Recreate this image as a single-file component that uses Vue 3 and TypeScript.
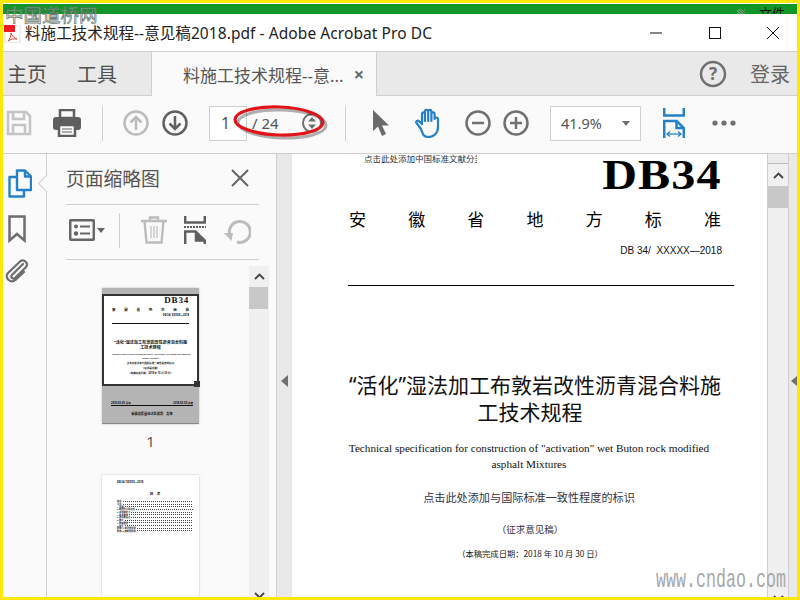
<script setup lang="ts">
const provinceChars: string[] = ['安', '徽', '省', '地', '方', '标', '准']
const tocRows: string[] = ['前言', '引言', '1 范围', '2 规范性引用文件', '3 术语和定义', '4 技术要求', '5 混合料设计', '6 施工', '7 质量管理', '8 安全', '附录 A 规范性附录', '附录 B 资料性附录']
</script>

<template>
  <div class="frame">
    <div class="green"><i class="hatch"></i><span class="clipped-file">文件</span></div>

    <header class="titlebar">
      <svg class="pdf-icon" width="17" height="18" viewBox="0 0 17 18">
        <path d="M1 0h15v18H1z" fill="#fff" stroke="#ddd" />
        <rect x="0" y="0" width="11" height="7" fill="#ee1c25" />
        <path d="M4 16c2-2 3-5 3-8 1 3 3 5 6 6-3-.5-6 0-9 2z" fill="none" stroke="#d8453e" stroke-width="1" />
      </svg>
      <span class="title-text">料施工技术规程--意见稿2018.pdf - Adobe Acrobat Pro DC</span>
      <div class="winbtns">
        <svg width="14" height="14" viewBox="0 0 14 14"><path d="M1 7h12" stroke="#111" stroke-width="1" /></svg>
        <svg width="14" height="14" viewBox="0 0 14 14"><rect x="1.5" y="1.5" width="11" height="11" fill="none" stroke="#111" /></svg>
        <svg width="14" height="14" viewBox="0 0 14 14"><path d="M1 1l12 12M13 1L1 13" stroke="#111" stroke-width="1" /></svg>
      </div>
    </header>

    <nav class="tabbar">
      <div class="nav-left">
        <span class="nav-item">主页</span>
        <span class="nav-item second">工具</span>
      </div>
      <div class="active-tab">
        <span class="tab-name">料施工技术规程--意...</span>
        <span class="tab-x">×</span>
      </div>
      <div class="nav-right">
        <svg width="28" height="28" viewBox="0 0 28 28">
          <circle cx="14" cy="14" r="12" fill="none" stroke="#707070" stroke-width="2.5" />
          <text x="14" y="20" text-anchor="middle" class="help-q">?</text>
        </svg>
        <span class="login">登录</span>
      </div>
    </nav>

    <div class="toolbar">
      <svg class="t-save" width="26" height="26" viewBox="0 0 26 26" fill="none" stroke="#c4c4c4" stroke-width="2.5">
        <path d="M2 2h18l4 4v18H2z" />
        <path d="M7 2v7h11V2M7 24v-9h12v9" />
      </svg>
      <svg class="t-print" width="28" height="28" viewBox="0 0 28 28">
        <path d="M7 1h14v8H7z" fill="none" stroke="#5f5f5f" stroke-width="2.5" />
        <rect x="0" y="8" width="28" height="13" rx="3" fill="#5f5f5f" />
        <rect x="6" y="16" width="16" height="11" fill="#fafafa" stroke="#5f5f5f" stroke-width="2.5" />
        <path d="M9 20h10M9 23h10" stroke="#5f5f5f" />
      </svg>
      <i class="sep t-sep1"></i>
      <svg class="t-up" width="26" height="26" viewBox="0 0 26 26" fill="none" stroke="#bcbcbc" stroke-width="2.5">
        <circle cx="13" cy="13" r="11.5" />
        <path d="M13 20V7M7.5 12.5L13 7l5.5 5.5" />
      </svg>
      <svg class="t-down" width="26" height="26" viewBox="0 0 26 26" fill="none" stroke="#606060" stroke-width="2.5">
        <circle cx="13" cy="13" r="11.5" />
        <path d="M13 6v13M7.5 13.5L13 19l5.5-5.5" />
      </svg>
      <div class="page-input">1</div>
      <span class="page-total">/ 24</span>
      <svg class="t-step" width="20" height="20" viewBox="0 0 20 20">
        <circle cx="10" cy="10" r="9" fill="#fafafa" stroke="#707070" stroke-width="2" />
        <path d="M10 4l4 4.5H6zM10 16l-4-4.5h8z" fill="#707070" />
      </svg>
      <i class="sep t-sep2"></i>
      <svg class="t-cursor" width="18" height="26" viewBox="0 0 18 26">
        <path d="M1 0v21l5-4.5L10 26l4-2-4-8.5h7z" fill="#6b6b6b" />
      </svg>
      <svg class="t-hand" width="28" height="30" viewBox="0 0 28 30" fill="none" stroke="#2680c8" stroke-width="2.2" stroke-linecap="round" stroke-linejoin="round">
        <path d="M6 21L1.500 15c-1-1.800 1.200-3.200 2.600-1.800L7 16V6c0-2.200 3-2.200 3 0v7-9.500c0-2.200 3.200-2.200 3.200 0V13 3.500c0-2.200 3.200-2.200 3.200 0V13 6c0-2.200 3.200-2.200 3.200 0v5 0c0-2 3.400-2 3.400 0v8c0 6-4 10-9.500 10S8 26 6 21z" />
      </svg>
      <svg class="t-minus" width="26" height="26" viewBox="0 0 26 26" fill="none" stroke="#707070" stroke-width="2.5">
        <circle cx="13" cy="13" r="11.5" />
        <path d="M7 13h12" />
      </svg>
      <svg class="t-plus" width="26" height="26" viewBox="0 0 26 26" fill="none" stroke="#707070" stroke-width="2.5">
        <circle cx="13" cy="13" r="11.5" />
        <path d="M7 13h12M13 7v12" />
      </svg>
      <div class="zoom-select">
        <span>41.9%</span>
        <i class="caret"></i>
      </div>
      <svg class="t-fit" width="22" height="30" viewBox="0 0 22 30" fill="none" stroke="#2680c8" stroke-width="2.5">
        <path d="M1.200 0v7.500h19.600V0" />
        <path d="M1.200 30V13h12.500l7.100 7v10" />
        <path d="M13.500 13v7h7" />
        <path d="M5 26h12" stroke-width="1.3" />
        <path d="M7 23.500L4 26l3 2.500M15 23.500l3 2.500-3 2.500" stroke-width="1.3" />
      </svg>
      <svg class="t-dots" width="24" height="6" viewBox="0 0 24 6" fill="#707070">
        <circle cx="3" cy="3" r="2.6" /><circle cx="12" cy="3" r="2.6" /><circle cx="21" cy="3" r="2.6" />
      </svg>
    </div>

    <main class="body">
      <aside class="rail">
        <svg width="24" height="29" viewBox="0 0 24 29" fill="none" stroke="#2680c8" stroke-width="2.4" stroke-linejoin="round">
          <path d="M9 1.500h8l6 6V21H9z" />
          <path d="M17 1.500v6h6" />
          <path d="M9 8H1.500v19.500H16V21" />
        </svg>
        <svg class="rail-book" width="18" height="28" viewBox="0 0 18 28" fill="none" stroke="#6e6e6e" stroke-width="2.5">
          <path d="M1.500 1.500h15v24L9 19l-7.500 6.500z" />
        </svg>
        <svg class="rail-clip" width="24" height="26" viewBox="0 0 24 26" fill="none" stroke="#6e6e6e" stroke-width="2.2" stroke-linecap="round">
          <path d="M18 6L7 17c-2 2.500 1 4.500 3 3L21 9c3-3.500-2-8.500-6-5.500L3 15c-4 4.500 2.500 11 7.500 7L19 14" />
        </svg>
        <i class="rail-notch"></i>
      </aside>

      <section class="panel">
        <div class="panel-head">
          <span class="panel-title">页面缩略图</span>
          <svg width="18" height="18" viewBox="0 0 18 18"><path d="M1 1l16 16M17 1L1 17" stroke="#666" stroke-width="2" /></svg>
        </div>
        <div class="panel-tools">
          <svg width="26" height="22" viewBox="0 0 26 22" fill="none" stroke="#666" stroke-width="2.5">
            <rect x="1.200" y="1.200" width="23.600" height="19.600" rx="1" />
            <circle cx="7" cy="7.500" r="2" fill="#666" stroke="none" />
            <circle cx="7" cy="14.500" r="2.200" fill="#666" stroke="none" />
            <path d="M11 7.500h10M11 14.500h10" stroke-width="2" />
          </svg>
          <i class="mini-caret"></i>
          <i class="sep panel-sep"></i>
          <svg class="p-trash" width="26" height="28" viewBox="0 0 26 28" fill="none" stroke="#bcbcbc" stroke-width="2.4">
            <path d="M0 5h26M9 5V1.500h8V5M3.500 5l2 21.500h15l2-21.500" />
            <path d="M10 10v12M13 10v12M16 10v12" stroke-width="1.2" />
          </svg>
          <svg class="p-extract" width="22" height="28" viewBox="0 0 22 28" fill="none" stroke="#5f5f5f" stroke-width="2.5">
            <path d="M1.200 0v6.500h19.600V0" />
            <path d="M0 11h22" stroke-width="2" stroke-dasharray="2 1" />
            <path d="M1.200 28V15.500h10.300l9.300 9V28" />
            <path d="M12 15.500v9h8" fill="#5f5f5f" />
          </svg>
          <svg class="p-rotate" width="27" height="27" viewBox="0 0 27 27" fill="none" stroke="#bcbcbc" stroke-width="3">
            <path d="M6 18.500a10.500 10.500 0 1 1 7 6.500" />
            <path d="M0 16l9 0-1.500 8z" fill="#bcbcbc" stroke="none" />
          </svg>
        </div>
        <div class="panel-view">
          <div class="thumbs">
            <div class="thumb one">
              <div class="shade-top"></div>
              <div class="selection">
                <div class="m-db">DB34</div>
                <div class="m-prov"><span v-for="c in provinceChars" :key="c">{{ c }}</span></div>
                <div class="m-code">DB 34/ XXXXX—2018</div>
                <div class="m-line"></div>
                <div class="m-title">“活化”湿法加工布敦岩改性沥青混合料施<br />工技术规程</div>
                <div class="m-en">Technical specification for construction of "activation" wet Buton rock modified<br />asphalt Mixtures</div>
                <div class="m-mark">点击此处添加与国际标准一致性程度的标识</div>
                <div class="m-mark">（征求意见稿）</div>
                <div class="m-mark">（本稿完成日期：2018 年 10 月 30 日）</div>
                <i class="handle"></i>
              </div>
              <div class="shade-bottom">
                <div class="m-dates"><span>2018-XX-XX 发布</span><span>2018-XX-XX 实施</span></div>
                <div class="m-line"></div>
                <div class="m-issuer">安徽省质量技术监督局　发布</div>
              </div>
            </div>
            <div class="thumb-num">1</div>
            <div class="thumb two">
              <div class="toc-note">DB 34/ XXXXX—2018</div>
              <div class="toc-head">目　次</div>
              <div v-for="row in tocRows" :key="row" class="toc-row"><span>{{ row }}</span><i></i></div>
            </div>
          </div>
          <div class="panel-scroll">
            <div class="sb-btn"><svg width="11" height="7" viewBox="0 0 11 7"><path d="M1 6l4.500-4.500L10 6" fill="none" stroke="#444" stroke-width="1.8" /></svg></div>
            <div class="sb-thumb"></div>
            <div class="sb-space"></div>
            <svg class="sb-down" width="11" height="7" viewBox="0 0 11 7"><path d="M1 1l4.500 4.500L10 1" fill="none" stroke="#444" stroke-width="1.8" /></svg>
          </div>
        </div>
      </section>

      <div class="gutter"><i class="arrow-left"></i></div>

      <section class="doc">
        <div class="page">
          <div class="doc-class">点击此处添加中国标准文献分类号</div>
          <div class="doc-db"><span>DB34</span></div>
          <div class="doc-prov"><span v-for="c in provinceChars" :key="c">{{ c }}</span></div>
          <div class="doc-code">DB 34/&nbsp;&nbsp;XXXXX—2018</div>
          <div class="doc-line"></div>
          <h1 class="doc-title"><span class="title-first">“活化”湿法加工布敦岩改性沥青混合料施</span>工技术规程</h1>
          <p class="doc-en">Technical specification for construction of "activation" wet Buton rock modified<br />asphalt Mixtures</p>
          <p class="doc-mark">点击此处添加与国际标准一致性程度的标识</p>
          <p class="doc-draft">（征求意见稿）</p>
          <p class="doc-date">（本稿完成日期：2018 年 10 月 30 日）</p>
        </div>
        <div class="doc-scroll">
          <div class="sb-stub"></div>
          <div class="sb-btn tall"><svg width="11" height="7" viewBox="0 0 11 7"><path d="M1 6l4.500-4.500L10 6" fill="none" stroke="#444" stroke-width="1.8" /></svg></div>
          <div class="sb-thumb"></div>
          <div class="sb-space"></div>
          <svg class="sb-down low" width="11" height="7" viewBox="0 0 11 7"><path d="M1 1l4.500 4.500L10 1" fill="none" stroke="#444" stroke-width="1.8" /></svg>
        </div>
        <div class="doc-side"><i class="arrow-left small"></i></div>
      </section>
    </main>

    <!-- overlays: the marks pasted over the capture -->
    <svg class="oval" width="104" height="44" viewBox="0 0 104 44">
      <ellipse cx="54" cy="25" rx="44" ry="14" fill="none" stroke="#000" stroke-opacity=".3" stroke-width="3" transform="rotate(2 54 25)" />
      <ellipse cx="51" cy="22" rx="44" ry="14" fill="none" stroke="#e2141b" stroke-width="3.2" transform="rotate(2 51 22)" />
    </svg>
    <div class="wm-cn">中国道桥网</div>
    <div class="wm-url">www.cndao.com</div>
  </div>
</template>

<style>
html, body { margin: 0; padding: 0; background: #fff; }
</style>

<style scoped>
* { box-sizing: border-box; }
.frame {
  position: relative;
  width: 800px;
  height: 600px;
  border: 3px solid #ffe70a;
  background: #fff;
  display: flex;
  flex-direction: column;
  overflow: hidden;
  font-family: "Noto Sans", "Noto Sans CJK SC", sans-serif;
  color: #555;
}
.green {
  flex: none;
  height: 10px;
  margin-top: 1px;
  background: #119627;
  position: relative;
  overflow: hidden;
}
.hatch {
  position: absolute;
  right: 52px;
  top: 5px;
  width: 8px;
  height: 5px;
  background: repeating-linear-gradient(45deg, #6f9a78 0 1px, transparent 1px 2px);
}
.clipped-file {
  position: absolute;
  right: 12px;
  top: 1px;
  font-size: 13px;
  line-height: 16px;
  color: #111;
}
.titlebar {
  flex: none;
  height: 38px;
  display: flex;
  align-items: center;
  padding-left: 1px;
  border-bottom: 1px solid #cfcfcf;
}
.pdf-icon { margin-top: 2px; }
.title-text {
  margin-left: 4px;
  font-size: 15.5px;
  line-height: 18px;
  letter-spacing: .075px;
  color: #222;
  white-space: nowrap;
}
.winbtns {
  margin-left: auto;
  display: flex;
  gap: 44.5px;
  padding-right: 17px;
}
.tabbar {
  flex: none;
  height: 44px;
  display: flex;
  background: #e9e9e9;
  border-bottom: 1px solid #cfcfcf;
}
.nav-left {
  width: 149px;
  display: flex;
  align-items: center;
  padding-left: 4px;
  border-right: 1px solid #cfcfcf;
}
.nav-item { font-size: 20px; color: #505050; }
.nav-item.second { margin-left: 30px; }
.active-tab {
  width: 225px;
  margin-bottom: -1px;
  background: #fafafa;
  border-right: 1px solid #cfcfcf;
  display: flex;
  align-items: center;
  padding-left: 31px;
}
.tab-name { font-size: 17px; color: #555; white-space: nowrap; }
.tab-x { margin-left: 10px; font-size: 18px; font-weight: 700; color: #666; line-height: 18px; }
.nav-right {
  margin-left: auto;
  display: flex;
  align-items: center;
  padding-right: 7px;
}
.help-q { font-size: 17px; font-weight: 700; fill: #707070; font-family: "Noto Sans", sans-serif; }
.login { margin-left: 23px; font-size: 20px; color: #666; }

.toolbar {
  flex: none;
  height: 58px;
  display: flex;
  align-items: center;
  background: #fafafa;
  border-bottom: 1px solid #cfcfcf;
  padding-left: 3px;
  padding-bottom: 3px;
}
.sep { display: block; width: 1px; height: 35px; background: #cfcfcf; flex: none; }
.toolbar svg { flex: none; }
.t-print { margin-left: 21px; }
.t-sep1 { margin-left: 21px; }
.t-up { margin-left: 20px; }
.t-down { margin-left: 13px; }
.page-input {
  margin-left: 21px;
  width: 38px;
  height: 35px;
  background: #fff;
  border: 1px solid #cfcfcf;
  font-size: 16px;
  line-height: 33px;
  text-align: center;
  padding-right: 5px;
  color: #555;
}
.page-total { margin-left: 5px; width: 25px; font-size: 15px; color: #555; white-space: nowrap; }
.t-step { margin-left: 25px; }
.t-sep2 { margin-left: 23px; }
.t-cursor { margin-left: 26px; }
.t-hand { margin-left: 25px; }
.t-minus { margin-left: 22px; }
.t-plus { margin-left: 12px; }
.zoom-select {
  margin-left: 21px;
  width: 91px;
  height: 35px;
  background: #fff;
  border: 1px solid #cfcfcf;
  display: flex;
  align-items: center;
  justify-content: space-between;
  padding: 0 10px;
  font-size: 14.5px;
  color: #555;
}
.caret {
  width: 0;
  height: 0;
  border-left: 4px solid transparent;
  border-right: 4px solid transparent;
  border-top: 5px solid #707070;
}
.t-fit { margin-left: 22px; }
.t-dots { margin-left: 27px; }

.body {
  flex: 1;
  min-height: 0;
  display: flex;
  background: #e9e9e9;
}
.rail {
  position: relative;
  flex: none;
  width: 44px;
  background: #fafafa;
  border-right: 1px solid #cfcfcf;
  display: flex;
  flex-direction: column;
  align-items: flex-start;
  padding: 15px 0 0 5px;
}
.rail-book { margin-top: 17px; }
.rail-clip { margin: 15px 0 0 -3px; }
.rail-notch {
  position: absolute;
  right: -1px;
  top: 23px;
  width: 13px;
  height: 13px;
  background: #fafafa;
  border-left: 1px solid #cfcfcf;
  border-bottom: 1px solid #cfcfcf;
  transform: translateX(6.5px) rotate(45deg);
}
.panel {
  flex: none;
  width: 230px;
  background: #fafafa;
  border-right: 1px solid #cfcfcf;
  display: flex;
  flex-direction: column;
  padding-left: 19px;
}
.panel-head {
  flex: none;
  width: 193px;
  height: 51px;
  display: flex;
  align-items: center;
  justify-content: space-between;
  padding: 0 10px 2px 0;
  border-bottom: 1px solid #cfcfcf;
}
.panel-title { font-size: 18.8px; color: #555; white-space: nowrap; }
.panel-tools {
  flex: none;
  width: 193px;
  height: 55px;
  display: flex;
  align-items: center;
  padding: 0 0 4px 3px;
  border-bottom: 1px solid #cfcfcf;
}
.mini-caret {
  margin-left: 2px;
  width: 0;
  height: 0;
  border-left: 4px solid transparent;
  border-right: 4px solid transparent;
  border-top: 5px solid #666;
}
.panel-sep { margin-left: 14px; }
.p-trash { margin-left: 21px; }
.p-extract { margin-left: 17px; }
.p-rotate { margin-left: 18px; }
.panel-view {
  flex: 1;
  min-height: 0;
  display: flex;
  margin-left: -19px;
  padding-top: 6px;
  overflow: hidden;
}
.thumbs {
  flex: none;
  width: 202px;
  padding: 22px 0 0 55px;
}
.thumb {
  width: 97px;
  background: #fff;
  box-shadow: 0 0 2px rgba(0, 0, 0, .25);
  color: #111;
}
.thumb.one { position: relative; height: 136px; background: #b4b4b4; border-bottom: 1px solid #888; }
.shade-top { height: 6px; }
.selection {
  position: relative;
  height: 92px;
  background: #fff;
  border: 2px solid #333;
  padding: 0 8px;
}
.handle {
  position: absolute;
  right: -3px;
  bottom: -3px;
  width: 6px;
  height: 6px;
  background: #333;
}
.m-db { font-family: "Liberation Serif", serif; font-weight: 700; font-size: 9px; line-height: 9px; text-align: right; letter-spacing: .8px; }
.m-prov { display: flex; justify-content: space-between; font-size: 3.5px; line-height: 5px; margin-top: 2px; font-weight: 700; }
.m-code { font-size: 2.6px; line-height: 4px; text-align: right; margin-top: 1px; font-weight: 700; }
.m-line { height: 1px; background: #111; margin-top: 6px; }
.m-title { font-family: "Noto Sans", "Noto Sans CJK SC", sans-serif; font-size: 4.1px; line-height: 5px; text-align: center; margin-top: 16px; white-space: nowrap; font-weight: 700; }
.m-en { font-family: "Liberation Serif", serif; font-size: 2.3px; line-height: 3.5px; text-align: center; margin-top: 3px; white-space: nowrap; font-weight: 700; }
.m-mark { font-size: 2.5px; line-height: 4px; text-align: center; margin-top: 1px; white-space: nowrap; font-weight: 700; }
.shade-bottom { padding: 16px 6px 0 9px; }
.m-dates { display: flex; justify-content: space-between; font-size: 2.5px; line-height: 3px; font-weight: 700; }
.shade-bottom .m-line { margin-top: 0; }
.m-issuer { font-size: 3.2px; line-height: 4px; text-align: center; margin-top: 6px; font-weight: 700; }
.thumb-num { height: 51px; width: 97px; padding-top: 7px; text-align: center; font-size: 15px; line-height: 20px; color: #5a5a5a; }
.thumb.two { height: 130px; padding: 5px 6px 0 15px; }
.toc-note { font-size: 2.6px; line-height: 4px; font-weight: 700; }
.toc-head { font-size: 3.5px; line-height: 5px; text-align: center; margin: 7px 0 4px; font-weight: 700; }
.toc-row { display: flex; align-items: center; height: 2.7px; font-size: 2.3px; font-weight: 700; white-space: nowrap; }
.toc-row i { flex: 1; height: 1px; background: repeating-linear-gradient(90deg, #444 0 1px, transparent 1px 2px); margin-left: 1px; }
.panel-scroll {
  flex: none;
  width: 20px;
  background: #f0f0f0;
  display: flex;
  flex-direction: column;
  position: relative;
}
.sb-btn { height: 21px; display: flex; align-items: center; justify-content: center; }
.sb-thumb { height: 22px; width: 19px; background: #c8c8c8; flex: none; }
.sb-space { flex: 1; }
.sb-down { align-self: center; margin-bottom: -2px; flex: none; }
.sb-down.low { margin-bottom: -5px; }
.gutter {
  flex: none;
  width: 15px;
  display: flex;
  align-items: center;
  justify-content: center;
  padding-top: 11px;
}
.arrow-left {
  display: block;
  width: 0;
  height: 0;
  border-top: 6px solid transparent;
  border-bottom: 6px solid transparent;
  border-right: 7px solid #707070;
}
.arrow-left.small { border-top-width: 5px; border-bottom-width: 5px; border-right-width: 6px; }
.doc {
  flex: 1;
  min-width: 0;
  display: flex;
  overflow: hidden;
}
.page {
  flex: none;
  width: 475px;
  background: #fff;
  padding-left: 56px;
  padding-right: 33px;
  color: #111;
  font-family: "Noto Sans CJK SC", "Noto Sans", sans-serif;
}
.doc-class {
  height: 9px;
  margin: 0 0 0 16px;
  width: 113px;
  overflow: hidden;
  white-space: nowrap;
  font-size: 8.5px;
  line-height: 9px;
  color: #333;
}
.doc-db {
  font-family: "Liberation Serif", serif;
  font-weight: 700;
  font-size: 43px;
  line-height: 30px;
  height: 30px;
  margin-top: -3px;
  padding-right: 12px;
  text-align: right;
  color: #000;
}
.doc-db span {
  display: inline-block;
  letter-spacing: 1px;
  transform: scaleX(1.12);
  transform-origin: right center;
}
.doc-prov {
  display: flex;
  justify-content: space-between;
  width: 372px;
  margin: 17px 0 0 1px;
  font-size: 17px;
  line-height: 24px;
  color: #000;
}
.doc-code {
  margin-top: 13px;
  padding-right: 12px;
  text-align: right;
  font-family: "Liberation Sans", sans-serif;
  font-size: 10px;
  line-height: 14px;
  color: #111;
}
.doc-line { height: 1px; background: #000; margin-top: 27px; }
.doc-title {
  width: 384px;
  margin: 86px 0 0 -10px;
  font-family: "Noto Sans", "Noto Sans CJK SC", sans-serif;
  font-size: 21px;
  font-weight: 400;
  line-height: 27px;
  text-align: center;
  white-space: nowrap;
  color: #111;
}
.title-first { display: block; margin-left: 10px; }
.doc-en {
  width: 384px;
  margin: 14px 0 0 -11px;
  font-family: "Liberation Serif", serif;
  font-size: 11.2px;
  line-height: 16px;
  text-align: center;
  white-space: nowrap;
  color: #111;
}
.doc-mark {
  width: 384px;
  margin: 16px 0 0 -11px;
  font-size: 11.15px;
  line-height: 18px;
  text-align: center;
  color: #334;
}
.doc-draft {
  width: 384px;
  margin: 16px 0 0 -10px;
  font-size: 9.5px;
  line-height: 14px;
  text-align: center;
  color: #334;
}
.doc-date {
  width: 384px;
  margin: 11px 0 0 -10px;
  font-size: 8.3px;
  line-height: 12px;
  text-align: center;
  white-space: nowrap;
  color: #222;
}
.doc-scroll {
  flex: none;
  width: 22px;
  background: #f0f0f0;
  border-left: 1px solid #cfcfcf;
  border-right: 1px solid #cfcfcf;
  display: flex;
  flex-direction: column;
}
.doc-scroll .sb-thumb { width: 20px; }
.sb-stub { height: 10px; flex: none; background: #ececec; border-bottom: 1px solid #bbb; }
.sb-btn.tall { height: 22px; flex: none; }
.doc-side {
  flex: 1;
  display: flex;
  align-items: center;
  justify-content: flex-end;
  padding-top: 11px;
}
.oval {
  position: absolute;
  left: 225px;
  top: 96px;
  pointer-events: none;
}
.wm-cn {
  position: absolute;
  left: 2px;
  top: 1px;
  font-family: "Noto Sans CJK SC", sans-serif;
  font-size: 18.5px;
  line-height: 20px;
  color: rgba(255, 255, 255, .4);
  -webkit-text-stroke: .8px rgba(85, 105, 95, .85);
  white-space: nowrap;
}
.wm-url {
  position: absolute;
  left: 653px;
  top: 558px;
  font-family: "Liberation Mono", monospace;
  font-size: 17px;
  line-height: 26px;
  color: #a8a8a8;
  white-space: nowrap;
  transform: scale(.98, 1.55);
  transform-origin: left top;
}
</style>
